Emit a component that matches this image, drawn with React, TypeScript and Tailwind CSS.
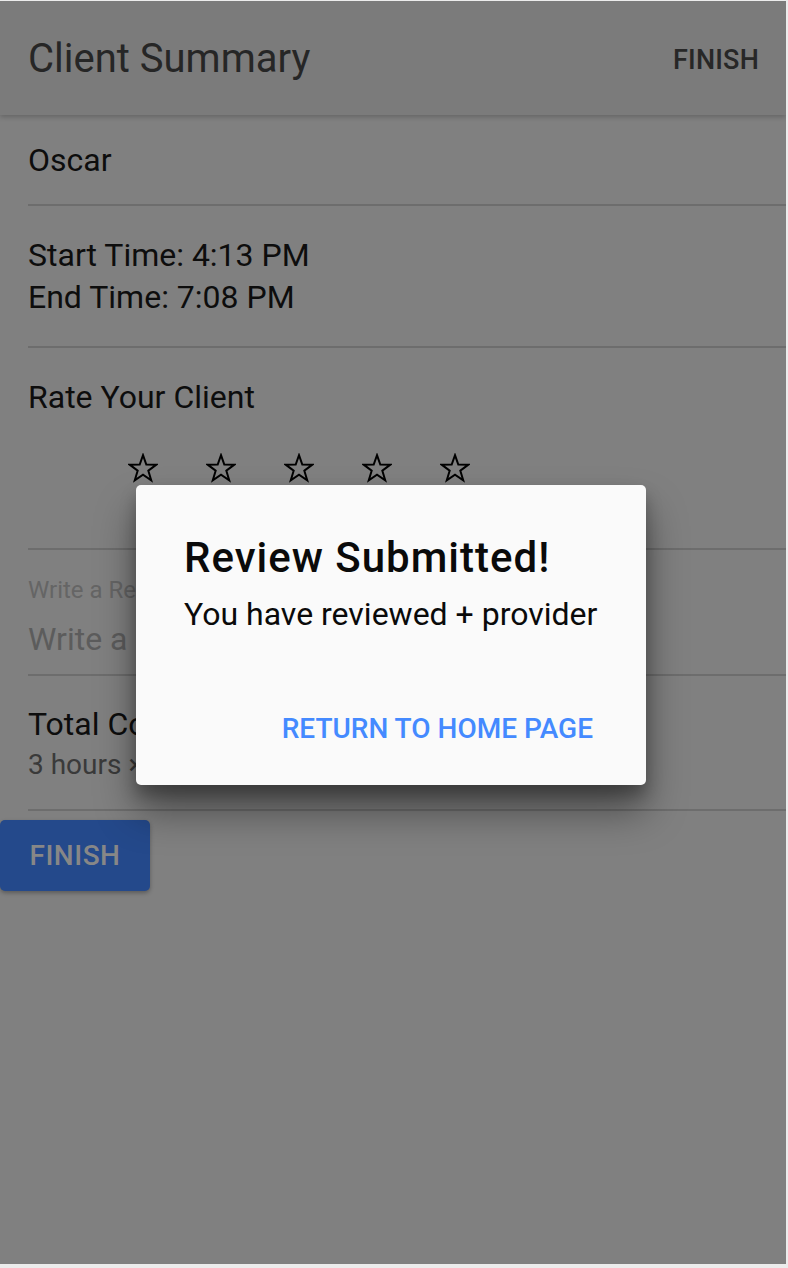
const font = { fontFamily: "Roboto, 'Noto Sans', sans-serif" };

function StarOutline() {
  return (
    <svg width="30" height="30" viewBox="0 0 30 30" className="block">
      <polygon
        points="15,2.2 18.29,11.47 28.32,11.67 20.33,17.73 23.23,27.33 15,21.6 6.77,27.33 9.67,17.73 1.68,11.67 11.71,11.47"
        fill="none"
        stroke="#000"
        strokeWidth="2"
        strokeLinejoin="miter"
      />
    </svg>
  );
}

function Divider() {
  return <div className="ml-[28px] h-[2px] bg-[#6d6d6d]" />;
}

export default function App() {
  return (
    <div className="w-[788px] h-[1268px] bg-[#ececec] pt-[1px] pr-[2px] pb-[4px]" style={font}>
      <div className="relative w-[786px] h-[1263px] bg-[#808080] overflow-hidden">
        {/* app bar */}
        <header className="relative z-10 flex h-[114px] items-center justify-between bg-[#7b7b7b] pl-[28px] pr-[27px] shadow-[0_2px_5px_rgba(0,0,0,0.22)]">
          <h1 className="text-[40px] leading-[48px] text-[#262626] mt-[2px]">Client Summary</h1>
          <button className="text-[27px] font-medium leading-[32px] tracking-[0.2px] text-[#272727] mt-[4px]">FINISH</button>
        </header>

        <section className="pl-[28px] pt-[25px] pb-[24px] text-[32px] leading-[40px] text-[#0d0d0d]">Oscar</section>
        <Divider />

        <section className="pl-[28px] pt-[28px] pb-[28px] text-[32px] leading-[42px] text-[#0d0d0d]">
          <p>Start Time: 4:13 PM</p>
          <p>End Time: 7:08 PM</p>
        </section>
        <Divider />

        <section className="pl-[28px] pt-[29px] pb-[65px]">
          <p className="text-[32px] leading-[40px] text-[#0d0d0d]">Rate Your Client</p>
          <div className="mt-[36px] ml-[100px] flex gap-[48px]">
            {[0, 1, 2, 3, 4].map((i) => (
              <StarOutline key={i} />
            ))}
          </div>
        </section>
        <Divider />

        <section className="pl-[28px] pt-[25px] pb-[15px]">
          <p className="text-[24px] leading-[30px] text-[#656565]">Write a Review</p>
          <p className="mt-[14px] text-[32px] leading-[40px] text-[#5c5c5c]">Write a review...</p>
        </section>
        <Divider />

        <section className="pl-[28px] pt-[28px] pb-[25px]">
          <p className="text-[32px] leading-[40px] text-[#0d0d0d]">Total Cost: $45.00</p>
          <p className="mt-[2px] text-[28px] leading-[38px] text-[#3a3a3a]">3 hours × $15.00/hr</p>
        </section>
        <Divider />

        <button className="mt-[9px] flex h-[71px] w-[150px] items-center justify-center rounded-[5px] bg-[#24498b] text-[28px] font-medium tracking-[0.5px] text-[#878787] shadow-[0_2px_4px_rgba(0,0,0,0.3)]">
          FINISH
        </button>

        {/* dialog */}
        <div className="absolute left-[136px] top-[484px] flex h-[300px] w-[510px] flex-col rounded-[5px] bg-[#fafafa] pl-[48px] pr-[37px] pt-[49px] shadow-[0_26px_40px_rgba(0,0,0,0.42),0_10px_16px_rgba(0,0,0,0.25)]">
          <h2 className="text-[42px] font-medium leading-[48px] tracking-[1px] text-[#0a0a0a]">Review Submitted!</h2>
          <p className="mt-[12px] text-[32px] leading-[40px] text-[#0a0a0a]">You have reviewed + provider</p>
          <div className="mt-auto mb-[20px] flex justify-end">
            <button className="h-[72px] px-[16px] text-[28px] font-medium text-[#448aff]">
              RETURN TO HOME PAGE
            </button>
          </div>
        </div>
      </div>
    </div>
  );
}
